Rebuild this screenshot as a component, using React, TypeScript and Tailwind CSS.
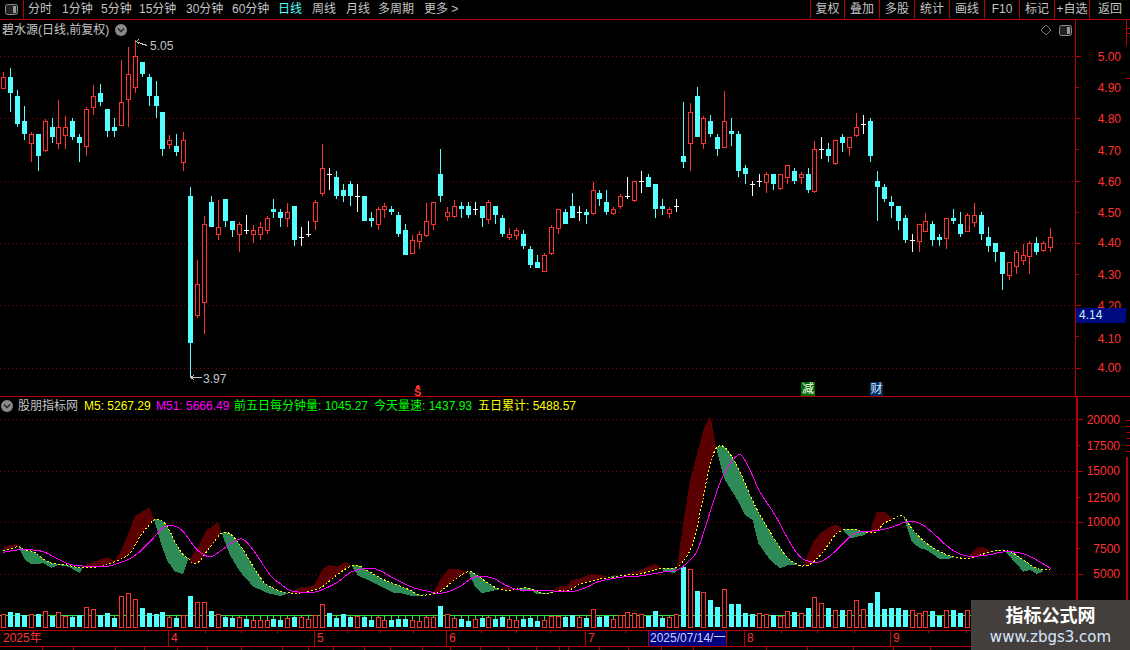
import React from "react";

const RED = "#ff3232";
const CYAN = "#54ffff";
const LINE = "#b80000";
const DOT = "#8c0000";

type Row = [string, number, number, number, number];

// candle rows: kind, wick top, body top, body bottom, wick bottom (thirds of a pixel)
const CANDLES_A: Row[] = [
  ["r",96,112,143,143],["c",84,112,158,215],["c",150,168,251,260],["c",198,243,281,299],["r",277,283,310,365],
  ["c",282,282,347,392],["r",236,244,329,335],["c",235,262,290,308],["r",180,262,310,326],["r",228,262,284,326],
  ["c",235,244,290,299],["c",283,292,308,365],["r",202,208,319,347],["r",135,169,200,224],["c",132,160,185,197],
  ["c",208,208,272,290],["c",235,262,272,290],["r",60,187,254,254],["r",21,103,178,260],["r",0,49,142,158],
  ["c",67,67,101,110],["c",102,111,167,197],["c",123,169,197,233],["c",217,217,326,347],["r",285,301,311,326],
  ["c",282,319,335,347],["r",277,301,367,392],["c",441,468,908,1012],["r",660,733,826,833],["r",529,553,787,881],
  ["c",468,487,560,560],["r",480,562,583,600],["c",478,478,542,560],["c",543,543,569,590],["r",547,553,583,635],
  ["w",525,571,571,581],["r",555,571,583,610],["r",546,562,583,600],["r",529,535,571,581],["c",477,508,515,533],
  ["c",508,517,533,560],["r",489,517,535,560],["c",499,499,599,617],["w",561,592,592,617],["w",543,583,583,590],
  ["r",481,487,544,569],["r",312,385,460,467],["w",385,403,403,449],["c",393,412,467,476],
];
const CANDLES_B: Row[] = [
  ["c",312,330,347,365],["c",303,312,347,377],["w",312,349,349,395],["c",348,348,422,422],["c",395,414,423,440],
  ["r",380,388,433,449],["r",369,379,388,413],["c",378,388,396,405],["c",396,405,461,470],["c",432,450,524,524],
  ["r",465,481,518,518],["r",453,463,482,506],["r",369,424,464,470],["r",367,367,433,449],["c",207,282,347,365],
  ["r",381,397,407,422],["r",360,379,407,413],["c",366,378,387,413],["c",366,378,404,413],["w",366,388,388,404],
  ["c",378,378,413,440],["r",360,367,416,431],["c",378,378,404,431],["c",405,414,461,470],["r",444,463,472,479],
  ["r",444,451,464,479],["c",450,462,497,506],["c",498,507,554,563],["c",525,546,563,563],["r",520,526,574,574],
  ["r",435,442,518,524],["r",388,388,443,461],["c",388,396,431,431],["c",339,378,413,413],["w",378,397,397,422],
  ["c",388,396,404,431],["r",306,331,398,404],["c",331,339,357,378],["c",330,366,396,404],["r",381,388,398,404],
  ["r",342,349,379,386],["w",291,349,349,357],["r",304,304,359,365],["w",273,304,304,339],["c",282,291,320,320],
  ["c",312,312,386,413],["c",357,378,387,404],["r",381,388,398,413],["w",357,379,379,395],
  ["c",66,228,246,264],["r",69,97,190,273],["c",21,48,171,171],["r",108,115,190,207],["c",105,123,162,171],
  ["c",162,171,207,228],["r",33,123,200,200],["c",114,153,162,198],["c",153,162,273,291],["c",255,264,282,312],
  ["w",303,312,312,348],["w",282,304,304,321],["r",276,283,305,339],["c",282,282,312,330],["r",282,283,323,330],
  ["r",256,256,292,312],["c",264,273,303,312],["r",276,283,292,312],["c",264,282,330,339],["r",183,208,332,339],
  ["w",171,208,208,237],["c",189,207,228,246],["r",181,181,249,255],["c",162,171,189,216],["r",171,171,200,228],
  ["r",99,142,164,171],["w",105,133,133,162],["c",114,123,228,246],["c",273,303,321,423],["c",312,321,357,366],
  ["c",348,366,378,414],["c",378,378,423,450],["c",405,414,480,489],["w",462,480,480,516],["r",432,433,482,516],
  ["r",399,424,452,452],["c",423,432,480,498],["c",462,471,480,498],["r",414,415,473,507],["c",387,414,423,432],
  ["c",396,432,462,471],["r",400,406,452,452],["r",369,406,425,441],["c",396,405,462,480],["c",441,471,498,516],
  ["c",489,489,516,546],["c",516,516,582,630],["r",547,547,584,600],["r",510,517,557,582],["r",492,526,539,555],
  ["r",484,490,527,582],["c",471,489,516,525],["r",484,490,509,516],["r",444,472,500,516],
];
const CANDLES = [
  ...CANDLES_A.map((r) => ({ r, base: 40 })),
  ...CANDLES_B.map((r) => ({ r, base: 80 })),
];

// volume tops, thirds of a pixel below y=500. negative = hollow red bar
const VOLUME = [
  -343,336,339,345,-343,342,-334,347,-337,-349,351,345,-322,-328,345,339,354,-289,-280,-298,324,339,342,336,-352,354,-346,289,-307,-307,333,-343,351,354,-352,357,-361,-361,-361,357,
  360,-355,351,-352,-358,-346,-313,339,354,342,351,-349,351,360,-352,-361,360,357,357,-361,-364,-352,-352,318,-343,-355,357,363,-358,354,-352,357,351,-358,-361,357,354,363,-361,-349,-349,
  351,346,-352,354,-328,351,348,-358,-346,-337,-340,-343,348,333,354,-350,-343,201,-208,273,-277,300,321,-268,312,312,339,342,-340,-343,345,-349,-334,336,-340,324,-292,-310,324,-331,
  331,-331,-301,-328,309,276,327,324,324,330,-331,-340,-334,334,348,-331,331,340,-331,
];

type P = [number, number];
const at = (ox: number, oy: number, raw: P[]): P[] => raw.map(([x, y]) => [ox + x / 3, oy + y / 3]);

// catmull-rom, the measured points are too coarse for the curve peaks
const smooth = (p: P[]): P[] => {
  const out: P[] = [];
  for (let i = 0; i < p.length - 1; i++) {
    const a = p[Math.max(0, i - 1)];
    const b = p[i];
    const c = p[i + 1];
    const d = p[Math.min(p.length - 1, i + 2)];
    for (let s = 0; s < 4; s++) {
      const t = s / 4;
      const f = (k: 0 | 1) =>
        0.5 * (2 * b[k] + (c[k] - a[k]) * t + (2 * a[k] - 5 * b[k] + 4 * c[k] - d[k]) * t * t + (3 * b[k] - a[k] - 3 * c[k] + d[k]) * t * t * t);
      out.push([f(0), f(1)]);
    }
  }
  out.push(p[p.length - 1]);
  return out;
};

const M5: P[] = smooth([
  ...at(0, 500, [[10,152],[30,147],[55,140],[75,150],[100,155],[125,173],[150,188],[175,192],[200,195],[235,203],[260,203],[300,200],[340,187],[365,176],[390,160],[420,110],[445,78],[465,58],[490,65],[510,95],[530,135],[550,165],[565,175],[575,187],[595,187],[620,155],[650,115],[665,100],[680,97],[700,110],[730,150],[760,200],[790,245],[815,262]]),
  ...at(280, 500, [[0,273],[25,278],[55,280],[90,272],[125,262],[170,225],[210,200],[235,197],[255,208],[285,225],[320,243],[360,258],[385,268],[420,285],[450,283],[480,275],[530,235],[565,215],[590,225],[625,250],[660,268],[700,270],[720,265],[750,265],[790,280],[830,275]]),
  ...at(560, 500, [[0,272],[25,272],[60,252],[100,242],[130,235],[160,232],[175,228],[205,225],[240,222],[280,212]]),
  ...at(660, 400, [[5,505],[48,503],[70,483],[95,440],[118,350],[140,240],[155,180],[170,142],[192,140],[215,170],[240,215],[270,285],[300,345],[345,420],[380,470],[410,492],[430,498],[455,490],[490,455],[525,405]]),
  ...at(840, 500, [[0,95],[15,88],[50,88],[80,98],[110,95],[130,72],[170,52],[190,48],[215,85],[260,130],[310,160],[350,172],[385,175],[420,165],[470,152],[510,155],[550,180],[590,205],[630,210]]),
]);

const M51: P[] = smooth([
  ...at(0, 500, [[10,157],[50,150],[100,150],[135,157],[170,175],[210,193],[250,198],[300,200],[340,195],[400,170],[450,125],[490,82],[520,77],[550,95],[590,148],[630,170],[665,150],[710,120],[735,122],[770,165],[810,225]]),
  ...at(280, 500, [[0,250],[35,273],[95,277],[130,268],[175,245],[215,215],[270,205],[300,212],[350,240],[400,263],[440,273],[480,280],[530,265],[575,235],[605,229],[640,235],[680,257],[720,270],[800,272]]),
  ...at(560, 500, [[0,274],[40,274],[80,262],[115,245],[180,232],[230,229],[300,218]]),
  ...at(660, 400, [[0,517],[50,510],[80,490],[110,455],[135,385],[165,290],[195,215],[235,165],[260,190],[300,275],[345,345],[380,410],[420,470],[465,487],[500,475]]),
  ...at(840, 500, [[0,140],[30,110],[60,95],[110,92],[160,80],[200,65],[240,70],[280,100],[330,145],[380,168],[440,165],[500,155],[560,165],[632,205]]),
]);

const MAROON = "#5a0000";
const SEA = "#2e8b57";
const RIBBONS: [string, P[]][] = [
  [MAROON, at(0, 500, [[10,139],[50,132],[55,140]])],
  [SEA, at(0, 500, [[55,140],[75,180],[95,193],[130,190],[155,203],[175,195],[205,200],[240,220],[248,203]])],
  [MAROON, at(0, 500, [[255,195],[320,172],[345,182]])],
  [MAROON, at(0, 500, [[345,182],[365,148],[385,100],[405,48],[448,22],[462,60]])],
  [SEA, at(0, 500, [[462,58],[480,120],[500,180],[525,215],[550,222],[565,175]])],
  [MAROON, at(0, 500, [[565,185],[600,130],[620,90],[655,68],[665,100]])],
  [SEA, at(0, 500, [[665,100],[690,165],[720,215],[760,260],[805,280],[840,288],[865,280]])],
  [MAROON, at(280, 500, [[25,280],[60,262],[100,258],[130,205],[150,195],[170,200],[195,186],[215,197]])],
  [SEA, at(280, 500, [[215,197],[235,228],[265,240],[300,258],[340,278],[365,280],[395,288],[420,288],[435,280]])],
  [MAROON, at(280, 500, [[460,277],[480,240],[505,208],[525,206],[565,215]])],
  [SEA, at(280, 500, [[565,215],[585,260],[605,280],[640,272],[660,268]])],
  [MAROON, at(280, 500, [[660,268],[670,260],[705,268]])],
  [SEA, at(280, 500, [[712,265],[730,275],[750,270],[770,282],[800,283],[815,272]])],
  [MAROON, at(280, 500, [[815,272],[840,258],[860,258],[875,240],[900,235],[925,225],[940,222],[980,228]])],
  [SEA, at(560, 500, [[150,230],[165,226]])],
  [MAROON, at(560, 500, [[185,225],[240,212],[285,190],[305,207]])],
  [SEA, at(560, 500, [[305,203],[310,212],[345,220],[350,205]])],
  [MAROON, at(660, 400, [[50,505],[70,370],[90,240],[110,165],[130,90],[150,48],[160,90],[168,145]])],
  [SEA, at(660, 400, [[168,142],[192,235],[235,305],[255,345],[278,360],[295,430],[330,480],[360,505],[385,495],[415,495]])],
  [MAROON, at(660, 400, [[430,495],[460,425],[485,395],[525,373],[540,380],[550,395]])],
  [SEA, at(840, 500, [[10,90],[30,115],[75,105],[80,98]])],
  [MAROON, at(840, 500, [[90,95],[110,35],[135,35],[155,55],[170,55]])],
  [SEA, at(840, 500, [[190,48],[215,125],[240,145],[260,150],[300,178],[325,178],[345,170]])],
  [MAROON, at(840, 500, [[390,165],[410,145],[425,140],[460,155]])],
  [SEA, at(840, 500, [[460,152],[490,148],[510,170],[550,215],[570,210],[590,222],[610,215]])],
  [MAROON, at(840, 500, [[605,210],[632,210]])],
];

const str = (p: P[]) => p.map(([x, y]) => `${x.toFixed(1)},${y.toFixed(1)}`).join(" ");
const ribbonPoints = (edge: P[]) => {
  const from = edge[0][0];
  const to = edge[edge.length - 1][0];
  const back = M5.filter(([x]) => x > from && x < to).reverse();
  return str([...edge, ...back]);
};
const candleX = (i: number) => Math.floor(3.46 + 6.936 * i) + 0.5;

const Candle = ({ i, r, base }: { i: number; r: Row; base: number }) => {
  const [kind, a, b, c, d] = r;
  const cx = candleX(i);
  const y = (v: number) => Math.round(base + v / 3);
  const color = kind === "c" ? CYAN : kind === "w" ? "#ffffff" : RED;
  return (
    <g>
      <rect x={cx - 0.5} y={y(a)} width={1} height={Math.max(1, y(d) - y(a))} fill={color} />
      {kind === "c" && <rect x={cx - 2.5} y={y(b)} width={5} height={Math.max(1, y(c) - y(b))} fill={color} />}
      {kind === "r" && (
        <rect x={cx - 2} y={y(b) + 0.5} width={4} height={Math.max(1, y(c) - y(b))} fill="#000" stroke={color} />
      )}
      {kind === "w" && <rect x={cx - 2.5} y={y(b)} width={5} height={1} fill={color} />}
    </g>
  );
};

const VolumeBar = ({ i, v }: { i: number; v: number }) => {
  const cx = candleX(i);
  const top = Math.round(500 + Math.abs(v) / 3);
  return (
    <g>
      {top > 615 && <rect x={cx - 0.5} y={615} width={1} height={top - 615} fill="#33dd33" />}
      {v > 0 ? (
        <rect x={cx - 2.5} y={top} width={5} height={627 - top} fill={CYAN} />
      ) : (
        <rect x={cx - 2} y={top + 0.5} width={4} height={627 - top} fill="#000" stroke={RED} />
      )}
    </g>
  );
};

const PRICE_LABELS: [string, number][] = [
  ["5.00", 57],["4.90", 88],["4.80", 119],["4.70", 151],["4.60", 182],["4.50", 213],["4.40", 243],["4.30", 275],["4.20", 306],["4.10", 339],["4.00", 368],
];
const VOL_LABELS: [string, number][] = [
  ["20000", 420],["17500", 446],["15000", 471],["12500", 498],["10000", 522],["7500", 549],["5000", 574],
];

const MENU = [
  { t: "分时", w: "w-[24px]" },
  { t: "1分钟", w: "w-[29px]" },
  { t: "5分钟", w: "w-[28px]" },
  { t: "15分钟", w: "w-[37px]" },
  { t: "30分钟", w: "w-[36px]" },
  { t: "60分钟", w: "w-[36px]" },
  { t: "日线", w: "w-[24px]", on: true },
  { t: "周线", w: "w-[24px]" },
  { t: "月线", w: "w-[22px]" },
  { t: "多周期", w: "w-[36px]" },
  { t: "更多 >", w: "w-[35px]" },
];
const TOOLS = [
  { t: "复权", w: "w-[34px]" },
  { t: "叠加", w: "w-[35px]" },
  { t: "多股", w: "w-[35px]" },
  { t: "统计", w: "w-[35px]" },
  { t: "画线", w: "w-[35px]" },
  { t: "F10", w: "w-[35px]" },
  { t: "标记", w: "w-[35px]" },
  { t: "+自选", w: "w-[35px]" },
  { t: "返回", w: "w-[41px]" },
];

const Chevron = () => (
  <div className="flex h-3 w-3 items-center justify-center rounded-full bg-[#8a8a8a]">
    <svg width="8" height="6" viewBox="0 0 8 6">
      <path d="M1 1.5 L4 4.5 L7 1.5" fill="none" stroke="#222" strokeWidth="1.3" />
    </svg>
  </div>
);

const PanelIcon = () => (
  <svg width="13" height="11" viewBox="0 0 13 11">
    <rect x="0.5" y="0.5" width="12" height="10" rx="2" fill="#222" stroke="#8a8a8a" />
    <rect x="8" y="2" width="3" height="7" fill="#9a9a9a" />
  </svg>
);

const TIME_MAJOR: [string, number][] = [["4", 168],["5", 314],["6", 446],["7", 585],["8", 744],["9", 890]];
const TIME_MINOR = [205, 241, 277, 347, 380, 413, 481, 516, 550, 625, 781, 817, 854, 928, 966];
const BOTTOM_TICKS = [42, 73, 115, 144, 177, 207, 241, 282, 308, 333, 364, 390, 422, 450, 480, 508, 536, 559, 568, 599, 628, 661, 693, 766, 807, 853, 893, 930];

export default function App() {
  return (
    <div className="relative flex h-[650px] w-[1130px] flex-col overflow-hidden bg-black font-['Liberation_Sans','Noto_Sans_CJK_SC',sans-serif] text-xs text-[#c4c4c4]">
      {/* toolbar */}
      <div className="flex h-5 flex-none items-center border-b border-[#b80000] leading-[19px]">
        <div className="flex h-full w-6 flex-none items-center justify-center border-r border-[#b80000]">
          <PanelIcon />
        </div>
        <div className="flex items-center gap-[10px] pl-1">
          {MENU.map((m) => (
            <span key={m.t} className={`${m.w} whitespace-nowrap ${m.on ? "text-[#54ffff]" : ""}`}>
              {m.t}
            </span>
          ))}
        </div>
        <div className="ml-auto flex h-full">
          {TOOLS.map((b) => (
            <span key={b.t} className={`${b.w} whitespace-nowrap border-l border-[#b80000] text-center`}>
              {b.t}
            </span>
          ))}
        </div>
      </div>

      {/* price chart */}
      <div className="flex h-[377px] flex-none border-b border-[#b80000]">
        <div className="relative w-[1075px] flex-none">
          <svg className="block" width="1075" height="376" viewBox="0 20 1075 376" shapeRendering="crispEdges">
            {[56, 118, 181, 243, 305, 368].map((y) => (
              <line key={y} x1="0" x2="1075" y1={y + 0.5} y2={y + 0.5} stroke={DOT} strokeDasharray="1 3" />
            ))}
            {CANDLES.map((c, i) => (
              <Candle key={i} i={i} r={c.r} base={c.base} />
            ))}
            <path d="M147 45.5 L141 43.5 L136 41.5 M139 39.5 L136 41.5 L139 43.5" fill="none" stroke="#c4c4c4" />
            <path d="M202 377.5 H191 M194 375 L191 377.5 L194 380" fill="none" stroke="#c4c4c4" />
            <polygon points="418,384 415.5,388 420.5,388" fill={RED} />
          </svg>

          <div className="absolute left-[2px] top-[2px] flex items-center gap-[6px]">
            <span>碧水源(日线,前复权)</span>
            <Chevron />
          </div>
          <div className="absolute right-[3px] top-1 flex items-center gap-[7px]">
            <svg width="12" height="12" viewBox="0 0 12 12">
              <path d="M6 1 L11 6 L6 11 L1 6 Z" fill="none" stroke="#7a7a7a" />
            </svg>
            <PanelIcon />
          </div>
          <span className="absolute left-[150px] top-[18px]">5.05</span>
          <span className="absolute left-[203px] top-[351px]">3.97</span>
          <span className="absolute left-[414px] top-[367px] text-[11px] font-bold leading-[10px] text-[#ff3232]">S</span>
          <span className="absolute left-[801px] top-[362px] h-[14px] w-[14px] bg-[#006a00] text-center leading-[14px] text-white">减</span>
          <span className="absolute left-[870px] top-[362px] h-[14px] w-[13px] bg-[#00305f] text-center leading-[14px] text-[#d8e8ff]">财</span>
        </div>
        <div className="relative flex-1 border-l border-[#b80000]">
          <svg className="absolute left-0 top-0" width="54" height="376" viewBox="1076 20 54 376" shapeRendering="crispEdges">
            {[56, 118, 181, 243, 305, 368].map((y) => (
              <line key={y} x1="1076" x2="1081" y1={y + 0.5} y2={y + 0.5} stroke={LINE} />
            ))}
            {[87, 149, 212, 274, 336].map((y) => (
              <line key={y} x1="1076" x2="1079" y1={y + 0.5} y2={y + 0.5} stroke={LINE} />
            ))}
            <line x1="1126.5" x2="1126.5" y1="20" y2="46" stroke={LINE} />
            <line x1="1126" x2="1130" y1="28.5" y2="28.5" stroke={LINE} />
            <line x1="1126" x2="1130" y1="33.5" y2="33.5" stroke={LINE} />
            <line x1="1126" x2="1130" y1="78.5" y2="78.5" stroke={LINE} />
          </svg>
          {PRICE_LABELS.map(([t, y]) => (
            <span key={t} className="absolute right-[9px] leading-4 text-[#ff3232]" style={{ top: y - 28 }}>
              {t}
            </span>
          ))}
          <div className="absolute left-0 top-[288px] h-[15px] w-[50px] bg-[#000a80] pl-[3px] leading-[15px] text-[#c8f0ff]">4.14</div>
        </div>
      </div>

      {/* indicator panel */}
      <div className="flex h-[233px] flex-none">
        <div className="relative w-[1076px] flex-none">
          <svg className="block" width="1076" height="233" viewBox="0 397 1076 233" shapeRendering="crispEdges">
            {[419, 471, 522, 574].map((y) => (
              <line key={y} x1="0" x2="1076" y1={y + 0.5} y2={y + 0.5} stroke={DOT} strokeDasharray="1 3" />
            ))}
            <line x1="0" x2="1076" y1="615.5" y2="615.5" stroke="#33dd33" />
            {RIBBONS.map(([color, edge], i) => (
              <polygon key={i} points={ribbonPoints(edge)} fill={color} />
            ))}
            {VOLUME.map((v, i) => (
              <VolumeBar key={i} i={i} v={v} />
            ))}
            <polyline points={str(M5)} fill="none" stroke="#ffff00" strokeDasharray="2 2" />
            <polyline points={str(M51)} fill="none" stroke="#ff00ff" />
          </svg>
          <div className="absolute left-[1px] top-[1px] flex items-center whitespace-nowrap leading-4">
            <Chevron />
            <span className="ml-[5px] w-[66px]">股朋指标网</span>
            <span className="w-[72px] text-[#ffff00]">M5: 5267.29</span>
            <span className="w-[78px] text-[#ff00ff]">M51: 5666.49</span>
            <span className="w-[140px] text-[#00ff00]">前五日每分钟量: 1045.27</span>
            <span className="w-[104px] text-[#00ff00]">今天量速: 1437.93</span>
            <span className="text-[#ffff00]">五日累计: 5488.57</span>
          </div>
        </div>
        <div className="relative flex-1 border-l-2 border-[#b80000]">
          <svg className="absolute left-0 top-0" width="52" height="233" viewBox="1078 397 52 233" shapeRendering="crispEdges">
            {[419, 471, 522, 574].map((y) => (
              <line key={y} x1="1078" x2="1083" y1={y + 0.5} y2={y + 0.5} stroke={LINE} />
            ))}
            {[445, 497, 548, 600].map((y) => (
              <line key={y} x1="1078" x2="1080" y1={y + 0.5} y2={y + 0.5} stroke={LINE} />
            ))}
            {[420, 426, 432, 438, 445, 451].map((y) => (
              <line key={y} x1="1126" x2="1130" y1={y + 0.5} y2={y + 0.5} stroke={LINE} />
            ))}
            <rect x="1126" y="457" width="2" height="173" fill={LINE} />
          </svg>
          {VOL_LABELS.map(([t, y]) => (
            <span key={t} className="absolute right-[10px] leading-4 text-[#ff3232]" style={{ top: y - 405 }}>
              {t}
            </span>
          ))}
        </div>
      </div>

      {/* time axis */}
      <div className="relative h-[17px] flex-none border-y border-[#b80000] leading-[15px] text-[#ff3232]">
        <span className="pl-[3px]">2025年</span>
        {TIME_MAJOR.map(([t, x]) => (
          <span key={t} className="absolute top-0 h-full border-l border-[#b80000] pl-[2px]" style={{ left: x }}>
            {t}
          </span>
        ))}
        {TIME_MINOR.map((x) => (
          <span key={x} className="absolute top-0 h-[2px] w-px bg-[#b80000]" style={{ left: x }} />
        ))}
        <div className="absolute left-[648px] top-0 h-full w-[79px] border-x border-[#b80000] bg-[#000080] pl-px text-[#c8d4ff]">
          2025/07/14/一
        </div>
      </div>
      <div className="relative flex-1">
        {BOTTOM_TICKS.map((x) => (
          <span key={x} className="absolute top-0 h-full w-px bg-[#b80000]" style={{ left: x }} />
        ))}
      </div>

      {/* watermark */}
      <div className="absolute bottom-0 right-0 flex h-[50px] w-[159px] flex-col items-center justify-center bg-[#443f3c]">
        <span className="text-[18px] font-bold leading-[24px] text-white">指标公式网</span>
        <span className="font-['DejaVu_Sans',sans-serif] text-[15px] leading-[18px] text-[#d6e6ff]">www.zbgs3.com</span>
      </div>
    </div>
  );
}
